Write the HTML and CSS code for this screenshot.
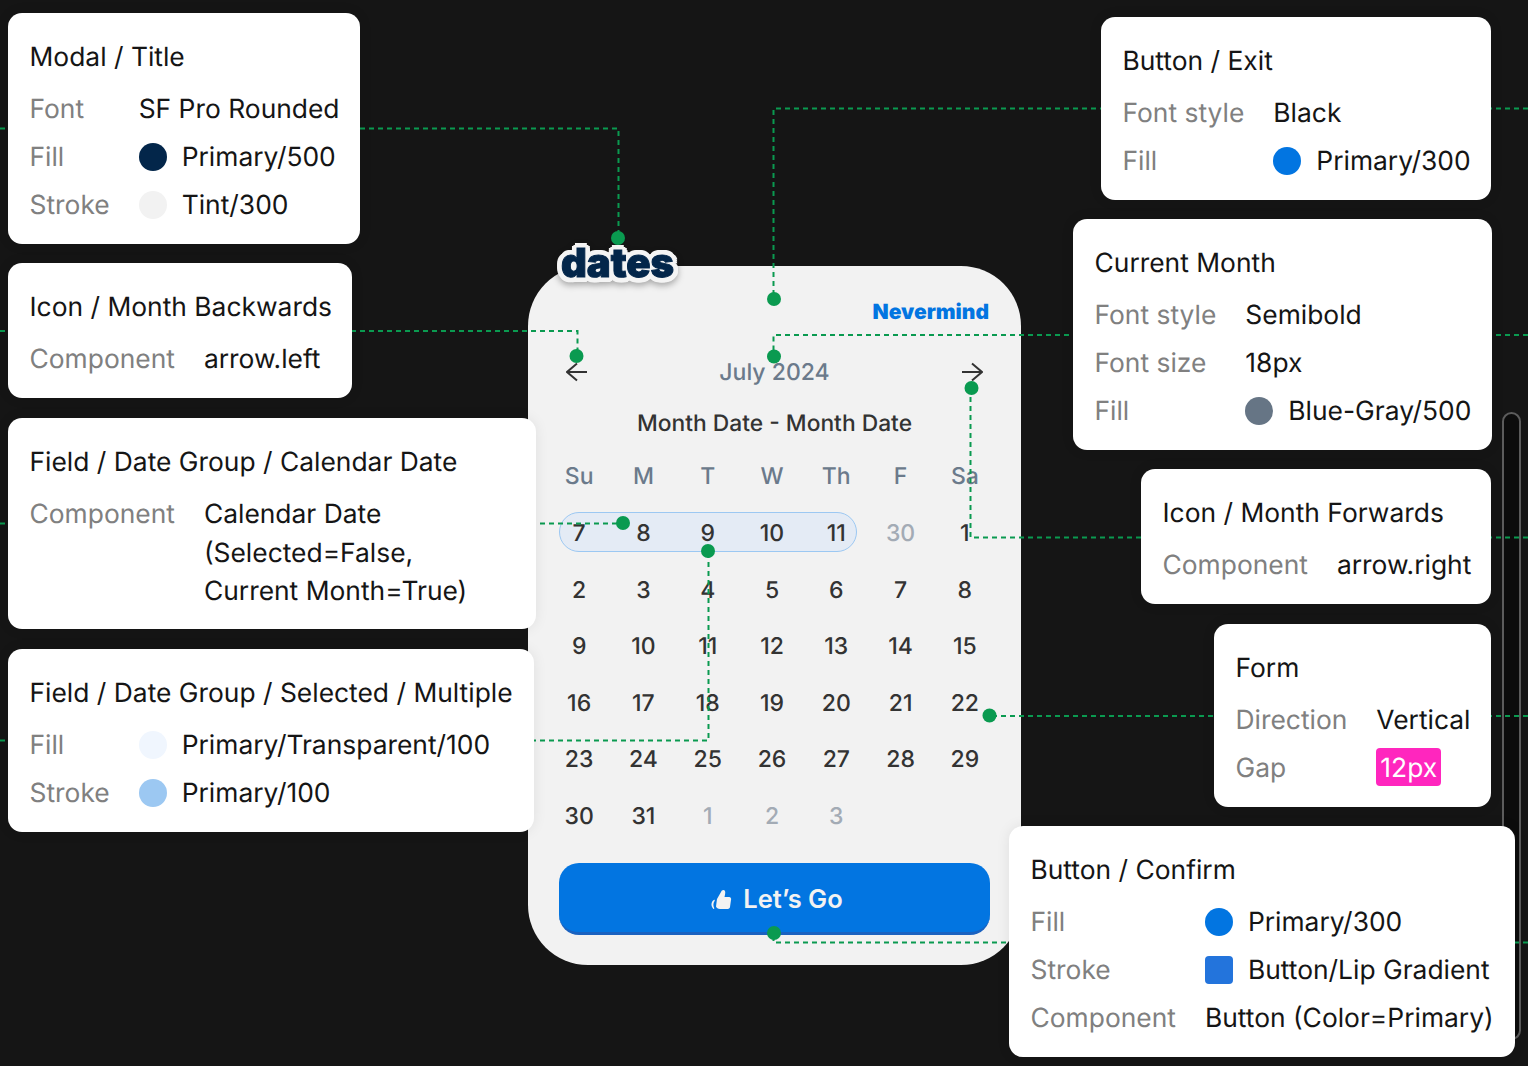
FILE: index.html
```html
<!DOCTYPE html>
<html lang="en">
<head>
    <meta charset="UTF-8">
    <title>Date range modal spec</title>
    <link rel="stylesheet" href="styles.css">
</head>
<body>
    <div class="canvas">
        <div class="scroll-track"></div>

        <div class="modal">
            <div class="logo">dates</div>
            <div class="exit">Nevermind</div>
            <div class="month-row">
                <svg class="arrow" viewBox="0 0 22 20"><path d="M21 10H1M11 1.500 1 10l10 8.500"/></svg>
                <span class="month">July 2024</span>
                <svg class="arrow" viewBox="0 0 22 20"><path d="M1 10h20M11 1.500l10 8.500-10 8.500"/></svg>
            </div>
            <div class="range-title">Month Date - Month Date</div>
            <div class="weekdays">
                <span>Su</span><span>M</span><span>T</span><span>W</span><span>Th</span><span>F</span><span>Sa</span>
            </div>
            <div class="dates">
                <div class="week week-selected">
                    <span>7</span><span>8</span><span>9</span><span>10</span><span>11</span><span class="muted">30</span><span>1</span>
                </div>
                <div class="week">
                    <span>2</span><span>3</span><span>4</span><span>5</span><span>6</span><span>7</span><span>8</span>
                </div>
                <div class="week">
                    <span>9</span><span>10</span><span>11</span><span>12</span><span>13</span><span>14</span><span>15</span>
                </div>
                <div class="week">
                    <span>16</span><span>17</span><span>18</span><span>19</span><span>20</span><span>21</span><span>22</span>
                </div>
                <div class="week">
                    <span>23</span><span>24</span><span>25</span><span>26</span><span>27</span><span>28</span><span>29</span>
                </div>
                <div class="week">
                    <span>30</span><span>31</span><span class="muted">1</span><span class="muted">2</span><span class="muted">3</span>
                </div>
            </div>
            <button class="confirm">
                <svg class="thumb" viewBox="0 0 22 20"><path d="M7 10l4-7c.5-2 3-3 4-1 .6 1.500 0 4-.5 6H19c2 0 2.500 2 2 3l-1 7c-.2 1.500-1.500 2-3 2h-7c-2 0-3.500-1-4-2.500z"/><path d="M3.800 11C1 13 .5 17 3.500 20c.5 0 1-.4.7-1-1.200-2.500-1-5 .4-7 .4-1-.1-1.400-.8-1z"/></svg>
                Let’s Go
            </button>
        </div>

        <svg class="wires" viewBox="0 0 1528 1066">
            <g class="wire">
                <path d="M0 128.500H618.500V238"/>
                <path d="M0 331H577.500V356"/>
                <path d="M0 523.500H623"/>
                <path d="M0 740.500H708.500V551"/>
                <path d="M1528 108.500H773.500V299"/>
                <path d="M1528 335H773.500V356"/>
                <path d="M1528 537.500H970.500V388"/>
                <path d="M1528 716H990"/>
                <path d="M1528 942.500H773.500V933"/>
            </g>
            <g class="pins">
                <circle cx="618" cy="238" r="7"/>
                <circle cx="576.500" cy="356" r="7"/>
                <circle cx="623" cy="523" r="7"/>
                <circle cx="708" cy="551" r="7"/>
                <circle cx="774" cy="299" r="7"/>
                <circle cx="774" cy="356.500" r="7"/>
                <circle cx="971.500" cy="388" r="7"/>
                <circle cx="989.500" cy="715.500" r="7"/>
                <circle cx="774" cy="933" r="7"/>
            </g>
        </svg>

        <div class="card card-title">
            <div class="card-name">Modal / Title</div>
            <dl class="props">
                <dt>Font</dt><dd>SF Pro Rounded</dd>
                <dt>Fill</dt><dd><i class="swatch navy"></i>Primary/500</dd>
                <dt>Stroke</dt><dd><i class="swatch tint"></i>Tint/300</dd>
            </dl>
        </div>

        <div class="card card-back">
            <div class="card-name">Icon / Month Backwards</div>
            <dl class="props">
                <dt>Component</dt><dd>arrow.left</dd>
            </dl>
        </div>

        <div class="card card-date">
            <div class="card-name">Field / Date Group / Calendar Date</div>
            <dl class="props">
                <dt>Component</dt><dd class="lines">Calendar Date<br>(Selected=False,<br>Current Month=True)</dd>
            </dl>
        </div>

        <div class="card card-multi">
            <div class="card-name">Field / Date Group / Selected / Multiple</div>
            <dl class="props">
                <dt>Fill</dt><dd><i class="swatch pale"></i>Primary/Transparent/100</dd>
                <dt>Stroke</dt><dd><i class="swatch sky"></i>Primary/100</dd>
            </dl>
        </div>

        <div class="card card-exit">
            <div class="card-name">Button / Exit</div>
            <dl class="props">
                <dt>Font style</dt><dd>Black</dd>
                <dt>Fill</dt><dd><i class="swatch blue"></i>Primary/300</dd>
            </dl>
        </div>

        <div class="card card-month">
            <div class="card-name">Current Month</div>
            <dl class="props">
                <dt>Font style</dt><dd>Semibold</dd>
                <dt>Font size</dt><dd>18px</dd>
                <dt>Fill</dt><dd><i class="swatch slate"></i>Blue-Gray/500</dd>
            </dl>
        </div>

        <div class="card card-forward">
            <div class="card-name">Icon / Month Forwards</div>
            <dl class="props">
                <dt>Component</dt><dd>arrow.right</dd>
            </dl>
        </div>

        <div class="card card-form">
            <div class="card-name">Form</div>
            <dl class="props">
                <dt>Direction</dt><dd>Vertical</dd>
                <dt>Gap</dt><dd><span class="gap-tag">12px</span></dd>
            </dl>
        </div>

        <div class="card card-confirm">
            <div class="card-name">Button / Confirm</div>
            <dl class="props">
                <dt>Fill</dt><dd><i class="swatch blue"></i>Primary/300</dd>
                <dt>Stroke</dt><dd><i class="swatch lip"></i>Button/Lip Gradient</dd>
                <dt>Component</dt><dd>Button (Color=Primary)</dd>
            </dl>
        </div>
    </div>
</body>
</html>
```

FILE: styles.css
```css
body {
    margin: 0;
    background: #151515;
    font-family: 'Inter', 'Liberation Sans', sans-serif;
    text-rendering: geometricPrecision;
}

.canvas {
    position: relative;
    width: 1528px;
    height: 1066px;
    overflow: hidden;
}

.scroll-track {
    position: absolute;
    left: 1502px;
    top: 412px;
    width: 15px;
    height: 624px;
    border: 2px solid #5c5c5c;
    border-radius: 10px;
    background: #0c0c0c;
}

/* the phone modal */
.modal {
    position: absolute;
    left: 528px;
    top: 266px;
    width: 493px;
    height: 699px;
    box-sizing: border-box;
    padding: 32px 24px 0 19px;
    background: #f2f2f2;
    border-radius: 60px;
    color: #333333;
}

.logo {
    position: absolute;
    left: 33px;
    top: -29px;
    font-size: 40px;
    font-weight: 900;
    line-height: 52px;
    color: #03264a;
    -webkit-text-stroke: 1px #03264a;
    text-shadow: 5px 0 0 #f4f4f4, -5px 0 0 #f4f4f4, 0 5px 0 #f4f4f4, 0 -5px 0 #f4f4f4,
        3.5px 3.5px 0 #f4f4f4, -3.5px 3.5px 0 #f4f4f4, 3.5px -3.5px 0 #f4f4f4, -3.5px -3.5px 0 #f4f4f4,
        5px 2px 0 #f4f4f4, -5px 2px 0 #f4f4f4, 5px -2px 0 #f4f4f4, -5px -2px 0 #f4f4f4,
        2px 5px 0 #f4f4f4, -2px 5px 0 #f4f4f4, 2px -5px 0 #f4f4f4, -2px -5px 0 #f4f4f4;
    filter: drop-shadow(0 3px 3px rgba(0, 0, 0, 0.3));
}

.exit {
    margin-right: 8px;
    text-align: right;
    font-size: 21px;
    font-weight: 900;
    line-height: 30px;
    color: #0275e1;
}

.month-row {
    display: flex;
    align-items: center;
    justify-content: space-between;
    height: 40px;
    margin: 24px 14px 0 19px;
}

.arrow {
    width: 22px;
    height: 20px;
    margin-top: -1px;
    fill: none;
    stroke: #333333;
    stroke-width: 2;
}

.month {
    font-size: 23px;
    font-weight: 500;
    color: #6b7a8b;
}

.range-title {
    margin-top: 17px;
    padding-left: 5px;
    text-align: center;
    font-size: 22.8px;
    font-weight: 500;
    line-height: 30px;
}

.weekdays,
.week {
    display: grid;
    grid-template-columns: repeat(7, 1fr);
    text-align: center;
    font-size: 23px;
    font-weight: 500;
}

.weekdays {
    margin-top: 22px;
    line-height: 30px;
    color: #6b7a8b;
}

.dates {
    margin-top: 14px;
}

.week {
    height: 56.6px;
    line-height: 56.6px;
    isolation: isolate;
}

.week .muted {
    color: #a3abb5;
}

.week-selected {
    position: relative;
}

.week-selected::before {
    content: '';
    position: absolute;
    z-index: -1;
    left: 12px;
    top: 7px;
    width: 296px;
    height: 38px;
    border: 1px solid #9cc8f2;
    border-radius: 20px;
    background: #e4ebf5;
}

.confirm {
    display: flex;
    align-items: center;
    justify-content: center;
    gap: 11px;
    width: 431px;
    height: 72px;
    margin: 18px 0 0 12px;
    padding: 3px 0 0 4px;
    border: none;
    border-bottom: 3px solid #1a62c0;
    border-radius: 20px;
    background: #0275e1;
    color: #f2f2f2;
    font-family: inherit;
    font-size: 25.5px;
    font-weight: 600;
}

.thumb {
    width: 22px;
    height: 20px;
    fill: #f2f2f2;
}

/* dashed connectors */
.wires {
    position: absolute;
    left: 0;
    top: 0;
    width: 1528px;
    height: 1066px;
}

.wire path {
    fill: none;
    stroke: #0a9a50;
    stroke-width: 2;
    stroke-dasharray: 5 4;
}

.pins circle {
    fill: #0a9a50;
}

/* spec cards */
.card {
    position: absolute;
    box-sizing: border-box;
    padding: 25px 0 20px 21.5px;
    background: #ffffff;
    border-radius: 14px;
    box-shadow: 0 0 14px rgba(0, 0, 0, 0.08);
    color: #151515;
    font-size: 26.4px;
    line-height: 38px;
}

.card-name {
    margin-bottom: 14px;
    white-space: nowrap;
}

.props {
    display: grid;
    grid-template-columns: auto 1fr;
    column-gap: 29px;
    row-gap: 10px;
    margin: 0;
    white-space: nowrap;
}

.props dt {
    color: #808080;
}

.props dd {
    display: flex;
    align-items: center;
    gap: 15px;
    margin: 0;
}

.props dd.lines {
    display: block;
    line-height: 38.5px;
}

.swatch {
    flex: none;
    width: 28px;
    height: 28px;
    border-radius: 50%;
}

.navy { background: #03264a; }
.tint { background: #f2f2f2; }
.pale { background: #f0f6fe; }
.sky { background: #9cc8f2; }
.blue { background: #0275e1; }
.slate { background: #667585; }

.lip {
    border-radius: 4px;
    background: #2374dc;
}

.gap-tag {
    height: 38px;
    margin-top: -2px;
    padding: 0 4px;
    border-radius: 4px;
    background: #ff26be;
    color: #ffffff;
    line-height: 40px;
}

.card-title { left: 8px; top: 13px; width: 352px; }
.card-back { left: 8px; top: 263px; width: 344px; }
.card-date { left: 8px; top: 418px; width: 528px; padding-bottom: 18.5px; }
.card-multi { left: 8px; top: 649px; width: 526px; }
.card-exit { left: 1101px; top: 17px; width: 390px; }
.card-month { left: 1073px; top: 219px; width: 419px; }
.card-forward { left: 1141px; top: 469px; width: 350px; }
.card-form { left: 1214px; top: 624px; width: 277px; }
.card-confirm { left: 1009px; top: 826px; width: 506px; }
```
